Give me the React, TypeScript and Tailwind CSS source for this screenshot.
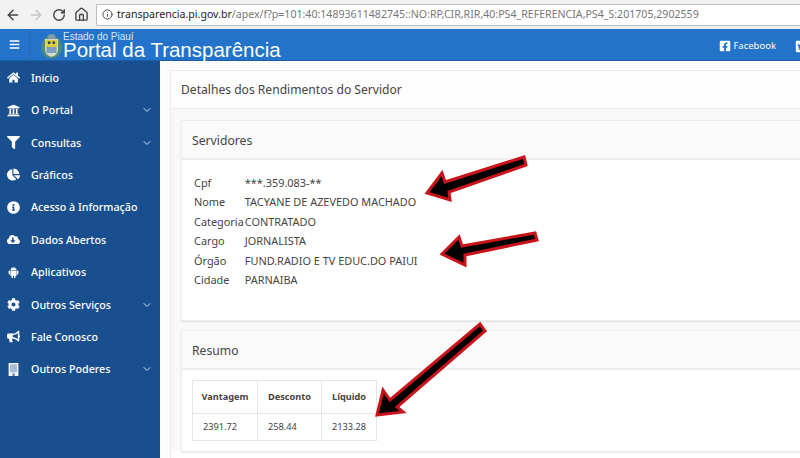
import { ArrowLeft, ArrowRight, ChevronDown, Home, Info, RotateCw } from "lucide-react";
import type { IconType } from "react-icons";
import { AiFillAndroid } from "react-icons/ai";
import {
  FaBars,
  FaBullhorn,
  FaChartPie,
  FaCloudDownloadAlt,
  FaCog,
  FaFacebookSquare,
  FaFilter,
  FaHome,
  FaInfoCircle,
  FaTwitterSquare,
  FaUniversity,
} from "react-icons/fa";

function BuildingIcon({ size }: { size?: number }) {
  return (
    <svg width={size} height={size} viewBox="0 0 12 12">
      <rect x="1.5" y="0" width="9" height="12" fill="#f4f6f9" />
      <rect x="2.8" y="1.2" width="6.4" height="7.4" fill="#a8bcd6" />
      <rect x="5" y="9.6" width="2" height="2.4" fill="#5f7ea8" />
    </svg>
  );
}

const menu: { label: string; icon: IconType | typeof BuildingIcon; sub?: boolean }[] = [
  { label: "Início", icon: FaHome },
  { label: "O Portal", icon: FaUniversity, sub: true },
  { label: "Consultas", icon: FaFilter, sub: true },
  { label: "Gráficos", icon: FaChartPie },
  { label: "Acesso à Informação", icon: FaInfoCircle },
  { label: "Dados Abertos", icon: FaCloudDownloadAlt },
  { label: "Aplicativos", icon: AiFillAndroid },
  { label: "Outros Serviços", icon: FaCog, sub: true },
  { label: "Fale Conosco", icon: FaBullhorn },
  { label: "Outros Poderes", icon: BuildingIcon, sub: true },
];

const details = [
  ["Cpf", "***.359.083-**"],
  ["Nome", "TACYANE DE AZEVEDO MACHADO"],
  ["Categoria", "CONTRATADO"],
  ["Cargo", "JORNALISTA"],
  ["Órgão", "FUND.RADIO E TV EDUC.DO PAIUI"],
  ["Cidade", "PARNAIBA"],
];

function Crest() {
  return (
    <svg width="21" height="26" viewBox="0 0 21 26" className="shrink-0">
      <ellipse cx="10.5" cy="14" rx="10.5" ry="11.5" fill="#4d8a78" />
      <ellipse cx="10.5" cy="4" rx="4" ry="3" fill="#7f9aa8" />
      <path d="M4 6h13v11q0 5-6.5 7q-6.5-2-6.5-7z" fill="#d5d8c8" />
      <rect x="5" y="7" width="11" height="7" fill="#dccb3a" />
      <rect x="7" y="8.5" width="2.4" height="2.4" fill="#26405f" />
      <rect x="11.6" y="8.5" width="2.4" height="2.4" fill="#26405f" />
      <rect x="5.5" y="14" width="10" height="6" fill="#7f9fc0" />
    </svg>
  );
}

function Panel({ title, className, children }: { title: string; className: string; children: React.ReactNode }) {
  return (
    <section className={`bg-white border border-[#ececec] shadow-[0_1px_1px_rgba(0,0,0,0.08)] ${className}`}>
      <h2 className="h-[39px] flex items-center px-[10px] pt-[3px] bg-[#fafafa] border-b-2 border-[#eeeeee] text-[12.2px] font-normal text-[#444]">
        {title}
      </h2>
      {children}
    </section>
  );
}

export default function App() {
  return (
    <div className="relative h-[458px] w-[800px] overflow-hidden flex flex-col bg-white font-['Noto_Sans','Open_Sans',sans-serif] text-[#444]">
      {/* browser bar */}
      <div className="h-[29px] shrink-0 flex items-center bg-[#f2f2f2] pl-[5px]">
        <ArrowLeft size={16} strokeWidth={2.2} className="text-[#444]" />
        <ArrowRight size={16} strokeWidth={2} className="ml-[7px] text-[#c4c4c4]" />
        <RotateCw size={14} strokeWidth={2.5} className="ml-[8px] text-[#444]" />
        <Home size={15} strokeWidth={2.2} className="ml-[8px] text-[#444]" />
        <div className="ml-[7px] h-[22px] flex-1 flex items-center bg-white border border-[#bcbcbc] rounded-l-[2px] border-r-0 pl-[5px] whitespace-nowrap text-[10.6px]">
          <Info size={11} className="text-[#444] mr-[4px] shrink-0" />
          <span className="text-[#222]">transparencia.pi.gov.br</span>
          <span className="text-[#777]">/apex/f?p=101:40:14893611482745::NO:RP,CIR,RIR,40:PS4_REFERENCIA,PS4_S:201705,2902559</span>
        </div>
      </div>

      {/* site header */}
      <header className="h-[32px] shrink-0 flex items-center bg-[#2273c9] text-white border-b border-[#1b5fa8]">
        <div className="w-[30px] h-full flex items-center justify-center border-r border-[#2a69b0]">
          <FaBars size={11} />
        </div>
        <div className="ml-[11px] pt-[2px]">
          <Crest />
        </div>
        <div className="ml-[1px] mt-[2px] flex flex-col font-['Liberation_Sans',sans-serif]">
          <span className="text-[10px] leading-[9px] text-[#dbe8f7]">Estado do Piauí</span>
          <span className="text-[20.5px] leading-[18px]">Portal da Transparência</span>
        </div>
        <div className="ml-auto flex items-center pt-[3px] text-[9.5px] whitespace-nowrap">
          <FaFacebookSquare size={12} />
          <span className="ml-[2px] mr-[19px]">Facebook</span>
          <FaTwitterSquare size={13} className="shrink-0 -mr-[8px]" />
        </div>
      </header>

      <div className="flex-1 flex min-h-0">
        {/* sidebar */}
        <nav className="w-[160px] shrink-0 bg-[#1a4f8f] text-white pt-[0.6px]">
          {menu.map((item) => (
            <div key={item.label} className="h-[32.4px] flex items-center text-[10.7px] font-medium">
              <span className="w-[31px] pl-[7px] shrink-0">
                <item.icon size={13} />
              </span>
              <span className="whitespace-nowrap">{item.label}</span>
              {item.sub && <ChevronDown size={12} className="ml-auto mr-[7px] text-[#cfdcec]" />}
            </div>
          ))}
        </nav>

        {/* content */}
        <main className="flex-1 min-w-0 bg-[#fcfcfc] pl-[10px] pt-[9px]">
          <section className="bg-white border border-[#ececec] pb-[10px] -mr-[10px]">
            <h1 className="h-[38px] flex items-center px-[10px] pt-[2px] bg-[#fdfdfd] border-b border-[#eeeeee] text-[12.1px] font-normal text-[#444]">
              Detalhes dos Rendimentos do Servidor
            </h1>
            <div className="bg-[#f8f8f8] px-[10px] pt-[11px]">
              <Panel title="Servidores" className="h-[201px] mb-[9px] -mr-[10px]">
                <table className="mt-[13px] ml-[12px] text-[10.9px] leading-[19.4px] text-[#444] border-separate border-spacing-0">
                  <tbody>
                    {details.map(([k, v]) => (
                      <tr key={k}>
                        <td className="pr-px pl-0 py-0 w-[50px] whitespace-nowrap">{k}</td>
                        <td className="p-0 whitespace-nowrap">{v}</td>
                      </tr>
                    ))}
                  </tbody>
                </table>
              </Panel>
              <Panel title="Resumo" className="h-[122px] -mr-[10px]">
                <table className="mt-[10px] ml-[10px] text-[9.2px] text-[#444] border-collapse border border-[#e6e6e6]">
                  <tbody>
                    <tr className="h-[33px]">
                      <th className="w-[65px] border border-[#e6e6e6] text-center font-bold">Vantagem</th>
                      <th className="w-[64px] border border-[#e6e6e6] text-center font-bold">Desconto</th>
                      <th className="w-[55px] border border-[#e6e6e6] text-center font-bold">Líquido</th>
                    </tr>
                    <tr className="h-[27px]">
                      <td className="border border-[#e6e6e6] pl-[10px]">2391.72</td>
                      <td className="border border-[#e6e6e6] pl-[10px]">258.44</td>
                      <td className="border border-[#e6e6e6] pl-[10px]">2133.28</td>
                    </tr>
                  </tbody>
                </table>
              </Panel>
            </div>
          </section>
        </main>
      </div>

      {/* annotation arrows drawn over the page */}
      <svg width="800" height="458" viewBox="0 0 800 458" className="absolute inset-0 pointer-events-none">
        <g fill="#000" stroke="#c8141a" strokeWidth="3">
          <polygon points="427,193 442,173 445,182 524,157 526,165 449,192 450,200" />
          <polygon points="442,254 459,237 462,246 535,233 537,240 465,255 465,265" />
          <polygon points="377,415 383,390 390,400 480,324 485,331 397,407 403,412" />
        </g>
      </svg>
    </div>
  );
}
